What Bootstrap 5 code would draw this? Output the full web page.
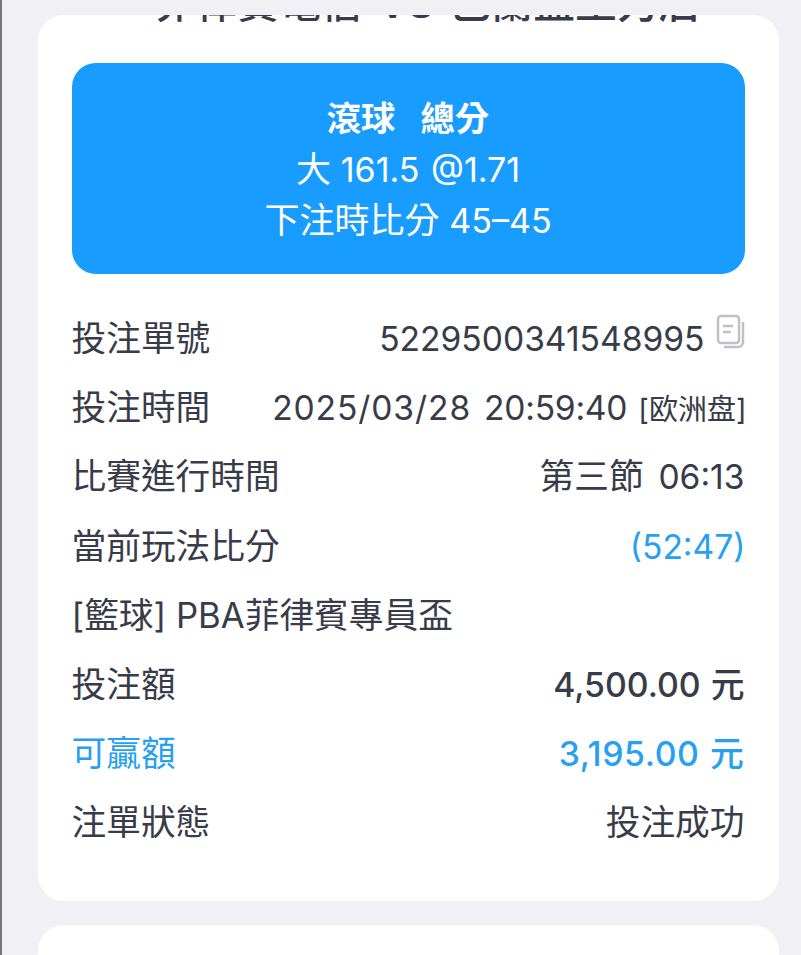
<!DOCTYPE html>
<html lang="zh-Hant">
<head>
  <meta charset="UTF-8">
  <meta name="viewport" content="width=device-width, initial-scale=1">
  <title>注單詳情</title>
  <link href="https://cdn.jsdelivr.net/npm/bootstrap@5.3.2/dist/css/bootstrap.min.css" rel="stylesheet">
  <style>
    html, body {
      height: 955px;
      overflow: hidden;
    }
    body {
      background-color: #f1f1f5;
      border-left: 2px solid #77777c;
      font-family: Inter, "Noto Sans CJK TC", sans-serif;
      color: #383b48;
    }
    .page-wrap {
      padding: 15px 22px 0 36px;
    }
    .sheet {
      background: #fff;
      border-radius: 26px;
      overflow: hidden;
    }
    .sheet-main {
      height: 886px;
      padding: 0 34.5px 0 33.5px;
      margin-bottom: 24px;
    }
    .sheet-next {
      height: 60px;
    }
    .match-title {
      height: 48px;
      margin: 0;
      padding-left: 38px;
      font-size: 41.8px;
      line-height: 40px;
      font-weight: 500;
      white-space: nowrap;
      word-spacing: 4px;
      transform: translateY(-32px);
    }
    .bet-box {
      background: #199cff;
      color: #fff;
      border-radius: 24px;
      height: 211px;
      padding-top: 30px;
      font-size: 35px;
      line-height: 51px;
      margin-bottom: 30px;
    }
    .bet-box strong {
      font-size: 34.4px;
      font-weight: 700;
    }
    .bet-box .gap-word {
      margin-left: 25px;
    }
    .box-latin {
      font-size: 34px;
      word-spacing: 2px;
    }
    .info-row {
      height: 69.2px;
      font-size: 34.7px;
      line-height: 69px;
      white-space: nowrap;
    }
    .info-latin {
      font-size: 33.6px;
    }
    .date-part {
      letter-spacing: 0.9px;
      margin-right: 13px;
    }
    .time-part {
      letter-spacing: -0.25px;
    }
    .clock-part {
      margin-left: 5px;
    }
    .score-part {
      margin-right: -1px;
    }
    .info-num {
      font-size: 33.8px;
      font-weight: 500;
      word-spacing: 1px;
    }
    .win-num {
      letter-spacing: 0.6px;
    }
    .info-blue {
      color: #27a0f2;
    }
    .tag-small {
      font-size: 29px;
      margin-left: 3px;
      margin-right: -2px;
    }
    .copy-icon {
      width: 30px;
      height: 36px;
      margin-left: 11px;
      margin-top: -14px;
      margin-right: -1px;
    }
  </style>
</head>
<body>
  <div class="page-wrap">
    <div class="sheet sheet-main">
      <h2 class="match-title text-center">菲律賓電信 VS 巴蘭盖王力后</h2>

      <div class="bet-box text-center">
        <div><strong>滾球</strong><strong class="gap-word">總分</strong></div>
        <div>大 <span class="box-latin">161.5 @1.71</span></div>
        <div>下注時比分 <span class="box-latin">45–45</span></div>
      </div>

      <div class="info-row d-flex justify-content-between">
        <span>投注單號</span>
        <span class="d-flex align-items-center"><span class="info-latin">5229500341548995</span>
          <svg class="copy-icon" viewBox="0 0 30 36" fill="none" stroke="#bfc1c7" stroke-width="2.5">
            <rect x="2" y="2" width="21" height="27" rx="3"/>
            <path d="M7 12h10M7 18h8"/>
            <path d="M27 8v20a5 5 0 0 1-5 5H8"/>
          </svg>
        </span>
      </div>
      <div class="info-row d-flex justify-content-between">
        <span>投注時間</span>
        <span class="info-latin"><span class="date-part">2025/03/28</span><span class="time-part">20:59:40</span><span class="tag-small"> [欧洲盘]</span></span>
      </div>
      <div class="info-row d-flex justify-content-between">
        <span>比賽進行時間</span>
        <span>第三節 <span class="info-latin clock-part">06:13</span></span>
      </div>
      <div class="info-row d-flex justify-content-between">
        <span>當前玩法比分</span>
        <span class="info-blue info-latin score-part">(52:47)</span>
      </div>
      <div class="info-row">[籃球] PBA菲律賓專員盃</div>
      <div class="info-row d-flex justify-content-between">
        <span>投注額</span>
        <span class="info-num">4,500.00 元</span>
      </div>
      <div class="info-row info-blue d-flex justify-content-between">
        <span>可贏額</span>
        <span class="info-num win-num">3,195.00 元</span>
      </div>
      <div class="info-row d-flex justify-content-between">
        <span>注單狀態</span>
        <span>投注成功</span>
      </div>
    </div>
    <div class="sheet sheet-next"></div>
  </div>
  <script src="https://cdn.jsdelivr.net/npm/bootstrap@5.3.2/dist/js/bootstrap.bundle.min.js"></script>
</body>
</html>
